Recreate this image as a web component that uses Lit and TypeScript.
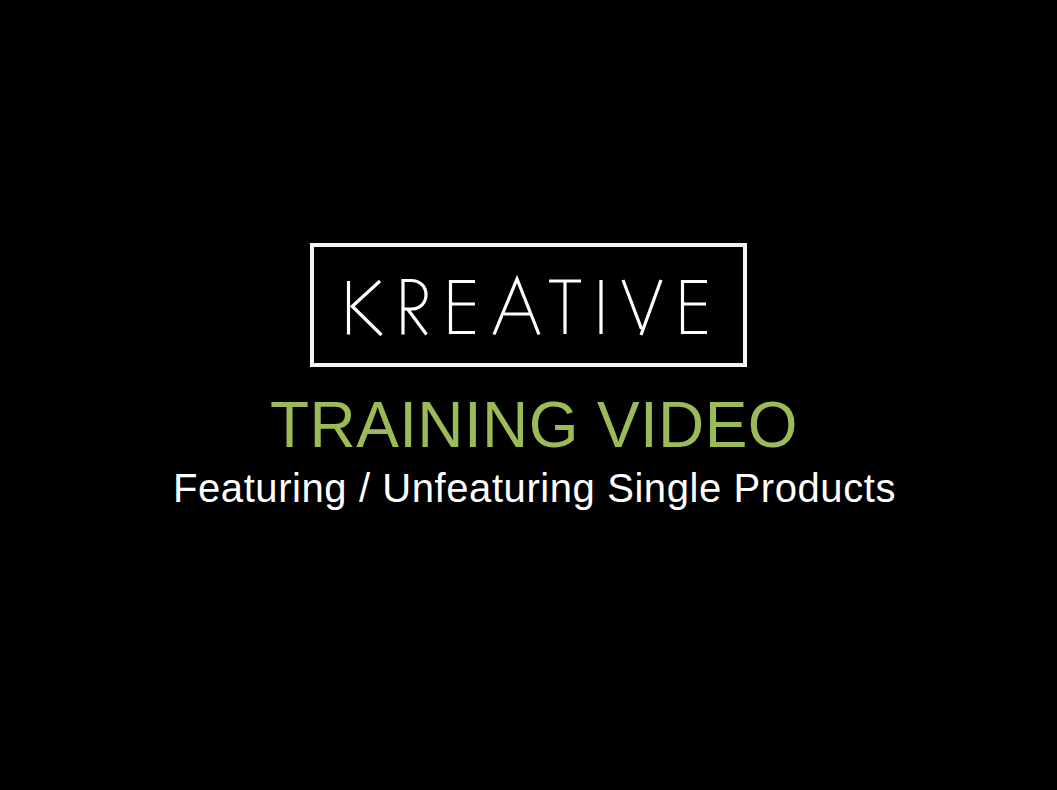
import { LitElement, html, css } from "lit";
import { customElement } from "lit/decorators.js";

@customElement("app-root")
export class AppRoot extends LitElement {
  static styles = css`
    :host { display: block; }
    .slide {
      height: 790px; background: #000; display: flex; flex-direction: column; align-items: center;
      font-family: "Liberation Sans", Arial, sans-serif; padding-top: 243px; box-sizing: border-box;
    }
    .logo { width: 437px; height: 124px; display: block; }
    .title { color: #9bbb59; font-size: 64px; line-height: 64px; letter-spacing: 0.36px; margin-top: 26px; margin-left: 11px; white-space: nowrap; }
    .sub { color: #fff; font-size: 40px; line-height: 46px; letter-spacing: 0.58px; margin-top: 8px; margin-left: 12px; white-space: nowrap; }
  `;
  render() {
    return html`<div class="slide">
      <svg class="logo" viewBox="310 243 437 124" fill="none" stroke="#fff" role="img" aria-label="KREATIVE">
        <rect x="312" y="245" width="433" height="120" stroke-width="4" stroke="#f4f4f0"/>
        <g stroke-width="3.2">
          <path d="M348.5 281V334.5M380 281L351 307.5M352 306L381.5 335"/>
          <path d="M403 334.5V280.5H411C431 280.5 431 309 411 309H403.5M408 309.5L426.5 334.5"/>
          <path d="M475 281.5H450.5V332.5H475M450.5 304H475"/>
          <path d="M494 334.5L517 279L539 334.5M504 314H531"/>
          <path d="M549 281H581M565 281V334"/>
          <path d="M601 280V334"/>
          <path d="M623 280L641.5 329"/>
          <path d="M661 280L641 335"/>
          <path d="M707 281.5H682.5V332.5H707M682.5 304H706"/>
        </g>
      </svg>
      <div class="title">TRAINING VIDEO</div>
      <div class="sub">Featuring / Unfeaturing Single Products</div>
    </div>`;
  }
}
